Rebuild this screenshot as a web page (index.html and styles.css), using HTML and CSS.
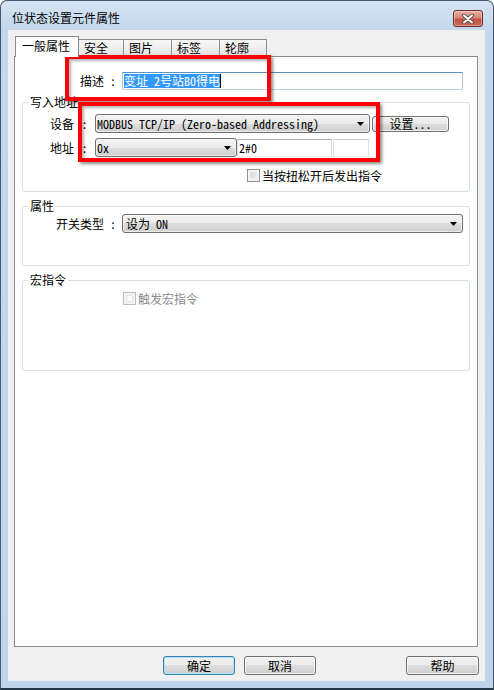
FILE: index.html
```html
<!DOCTYPE html>
<html lang="zh-CN">
<head>
<meta charset="utf-8">
<title>位状态设置元件属性</title>
<link rel="stylesheet" href="styles.css">
</head>
<body>
<div class="win">
  <div class="titlebar">
    <span class="title">位状态设置元件属性</span>
    <div class="close">
      <svg width="12" height="10" viewBox="0 0 12 10"><path d="M2 1.6L10 8.4M10 1.6L2 8.4" stroke="#4f4f4f" stroke-width="3.8" stroke-linecap="round" fill="none"/><path d="M2 1.6L10 8.4M10 1.6L2 8.4" stroke="#fff" stroke-width="2" stroke-linecap="round" fill="none"/></svg>
    </div>
  </div>
  <div class="client">
    <div class="tabs">
      <div class="tab sel">一般属性</div>
      <div class="tab">安全</div>
      <div class="tab">图片</div>
      <div class="tab">标签</div>
      <div class="tab">轮廓</div>
    </div>
    <div class="panel">
      <div class="row desc">
        <span class="lbl l82">描述</span><span class="colon c18">:</span>
        <div class="edit focus w341"><span class="selected">变址 2号站B0得电</span><span class="caret"></span></div>
      </div>

      <fieldset class="grp g1">
        <legend>写入地址</legend>
        <div class="row r1">
          <span class="lbl">设备</span><span class="colon c21">:</span>
          <div class="combo w275"><span class="val">MODBUS TCP/IP (Zero-based Addressing)</span><svg class="arrow" width="7" height="4" viewBox="0 0 7 4"><path d="M0 0H7L3.5 4Z" fill="#000"/></svg></div>
          <div class="btn set">设置...</div>
        </div>
        <div class="row r2">
          <span class="lbl">地址</span><span class="colon c21">:</span>
          <div class="combo w142"><span class="val">0x</span><svg class="arrow" width="7" height="4" viewBox="0 0 7 4"><path d="M0 0H7L3.5 4Z" fill="#000"/></svg></div>
          <div class="edit w95"><span class="val">2#0</span></div>
          <div class="edit blank w36"></div>
        </div>
        <div class="row chkrow c1">
          <span class="chk"></span><span class="chktext">当按扭松开后发出指令</span>
        </div>
      </fieldset>

      <fieldset class="grp g2">
        <legend>属性</legend>
        <div class="row r3">
          <span class="lbl l81">开关类型</span><span class="colon c18">:</span>
          <div class="combo w341"><span class="val">设为 ON</span><svg class="arrow" width="7" height="4" viewBox="0 0 7 4"><path d="M0 0H7L3.5 4Z" fill="#000"/></svg></div>
        </div>
      </fieldset>

      <fieldset class="grp g3">
        <legend>宏指令</legend>
        <div class="row chkrow c2">
          <span class="chk disabled"></span><span class="chktext gray">触发宏指令</span>
        </div>
      </fieldset>
    </div>
    <div class="btns">
      <div class="btn def w72">确定</div>
      <div class="btn w72 gap">取消</div>
      <div class="btn w73 right">帮助</div>
    </div>
  </div>
  <div class="hl hl1"></div>
  <div class="hl hl2"></div>
</div>
</body>
</html>
```
FILE: styles.css
```css
* { box-sizing: border-box; }
html, body { margin: 0; padding: 0; }
body {
  width: 494px;
  height: 690px;
  overflow: hidden;
  background: #fff;
  color: #000;
  font-family: "Noto Sans Mono CJK SC", "Noto Sans CJK SC", sans-serif;
  font-size: 12px;
}
.win {
  position: relative;
  width: 494px;
  height: 690px;
  border: 1px solid #46596c;
  border-bottom: 2px solid #23394a;
  border-radius: 7px 7px 0 0;
  background: linear-gradient(180deg, #d4e3f2 0px, #c3d8ed 29px, #bed5ec 100%);
  padding: 0 8px 7px 7px;
  display: flex;
  flex-direction: column;
}
.titlebar {
  height: 29px;
  flex-shrink: 0;
  display: flex;
  align-items: flex-start;
}
.title {
  margin: 9px 0 0 4px;
  line-height: 16px;
}
.close {
  margin: 9px 2px 0 auto;
  width: 30px;
  height: 17px;
  border: 1px solid #6d2f28;
  border-radius: 3px;
  background: linear-gradient(180deg, #e6aca0 0%, #d78677 45%, #c4503f 55%, #cc6a58 100%);
  box-shadow: inset 0 0 0 1px rgba(255,255,255,0.35);
  display: flex;
  align-items: center;
  justify-content: center;
}
.client {
  flex: 1;
  background: #f0f0f0;
  padding: 6px 7px 0 6px;
  display: flex;
  flex-direction: column;
}
.tabs {
  display: flex;
  align-items: flex-end;
  height: 20px;
  flex-shrink: 0;
  padding-left: 1px;
}
.tab {
  height: 17px;
  border: 1px solid #898c95;
  border-bottom: none;
  border-left: none;
  background: linear-gradient(180deg, #f7f7f7, #eeeeee 50%, #e4e4e4);
  padding-left: 5px;
  line-height: 15px;
  white-space: nowrap;
}
.tab:nth-child(2) { width: 45px; }
.tab:nth-child(3) { width: 48px; }
.tab:nth-child(4) { width: 48px; }
.tab:nth-child(5) { width: 47px; }
.tab.sel {
  width: 64px;
  height: 21px;
  margin-bottom: -1px;
  border-left: 1px solid #898c95;
  background: #fff;
  padding-left: 6px;
  line-height: 18px;
  position: relative;
  z-index: 1;
}
.panel {
  height: 591px;
  flex-shrink: 0;
  border: 1px solid #898c95;
  background: #fff;
  padding: 0 0 0 7px;
  display: flex;
  flex-direction: column;
  align-items: flex-start;
}
.row {
  display: flex;
  align-items: center;
}
.lbl { width: 24px; white-space: nowrap; line-height: 16px; }
.lbl.l82 { width: 82px; text-align: right; }
.lbl.l81 { width: 81px; text-align: right; }
.colon { text-align: center; line-height: 16px; }
.c18 { width: 18px; }
.c21 { width: 21px; }
.desc { margin-top: 15px; height: 18px; }
.edit {
  height: 18px;
  border: 1px solid;
  border-color: #abadb3 #dbdfe6 #e3e9ef #e2e3ea;
  background: #fff;
  padding: 0 1px;
  display: flex;
  align-items: center;
  white-space: pre;
  line-height: 16px;
}
.edit.focus { border-color: #5b91c0 #a8cae5 #b7d5ee #a8cae5; }
.edit.blank { border-color: #c4c6cb #e0e3e8 #e6ebf0 #dedfe4; margin-left: 1px; }
.selected { background: #3399ff; color: #fff; line-height: 14px; white-space: pre; }
.caret { width: 1px; height: 14px; background: #000; }
.w341 { width: 341px; }
.w275 { width: 275px; }
.w142 { width: 142px; }
.w95 { width: 95px; }
.w36 { width: 36px; }
.w72 { width: 72px; }
.w73 { width: 73px; }
.grp {
  margin: 0;
  padding: 0;
  width: 448px;
  min-width: 0;
  border: 1px solid #d5dfe5;
  border-radius: 3px;
}
.grp legend {
  padding: 0 2px;
  margin-left: 5px;
  line-height: 14px;
}
.g1 { margin-top: 5px; padding-bottom: 9px; }
.g2 { margin-top: 7px; padding-bottom: 32px; }
.g3 { margin-top: 7px; padding-bottom: 65px; }
.r1 { margin-top: 5px; height: 19px; padding-left: 27px; }
.r2 { margin-top: 5px; height: 19px; padding-left: 27px; }
.r3 { margin-top: 1px; height: 19px; }
.combo {
  height: 19px;
  border: 1px solid #707070;
  border-radius: 3px;
  background: linear-gradient(180deg, #f2f2f2 0%, #ebebeb 50%, #dddddd 50%, #cfcfcf 100%);
  box-shadow: inset 0 0 0 1px rgba(255,255,255,0.55);
  display: flex;
  align-items: center;
  padding: 0 5px 0 1px;
  line-height: 16px;
}
.combo .val { flex: 1; white-space: pre; }
.r3 .combo { padding-left: 3px; }
.arrow { flex-shrink: 0; }
.btn {
  height: 19px;
  border: 1px solid #707070;
  border-radius: 3px;
  background: linear-gradient(180deg, #f2f2f2 0%, #ebebeb 50%, #dddddd 50%, #cfcfcf 100%);
  box-shadow: inset 0 0 0 1px rgba(255,255,255,0.7);
  display: flex;
  align-items: center;
  justify-content: center;
  line-height: 16px;
  white-space: pre;
}
.btn.set { width: 77px; height: 16px; margin-left: 2px; line-height: 14px; }
.btn.def { border-color: #3c7fb1; box-shadow: inset 0 0 0 1px #a8e2f7; }
.chkrow { height: 13px; }
.c1 { margin-top: 12px; padding-left: 224px; }
.c2 { margin-top: 5px; padding-left: 100px; }
.chk {
  width: 13px;
  height: 13px;
  flex-shrink: 0;
  border: 1px solid #8f8f8f;
  background: linear-gradient(135deg, #cdd1d6, #f7f7f7);
  box-shadow: inset 0 0 0 2px #f4f4f4;
}
.chk.disabled {
  border-color: #bcbcbc;
  background: #fbfbfb;
  box-shadow: inset 0 0 0 2px #f4f4f4, inset 0 0 0 3px #e4e4e4;
}
.chktext { margin-left: 2px; line-height: 16px; white-space: nowrap; }
.chktext.gray { color: #8a8a8a; }
.btns {
  display: flex;
  margin-top: 9px;
  height: 19px;
  padding-left: 149px;
  margin-right: -1px;
}
.btn.gap { margin-left: 9px; }
.btn.right { margin-left: auto; }
.hl {
  position: absolute;
  border: 4px solid #ff0000;
  box-shadow: 2px 2px 3px rgba(0,0,0,0.45), inset 2px 2px 3px rgba(0,0,0,0.3);
  pointer-events: none;
}
.hl1 { left: 64px; top: 54px; width: 206px; height: 46px; }
.hl2 { left: 77px; top: 101px; width: 302px; height: 60px; }
```
